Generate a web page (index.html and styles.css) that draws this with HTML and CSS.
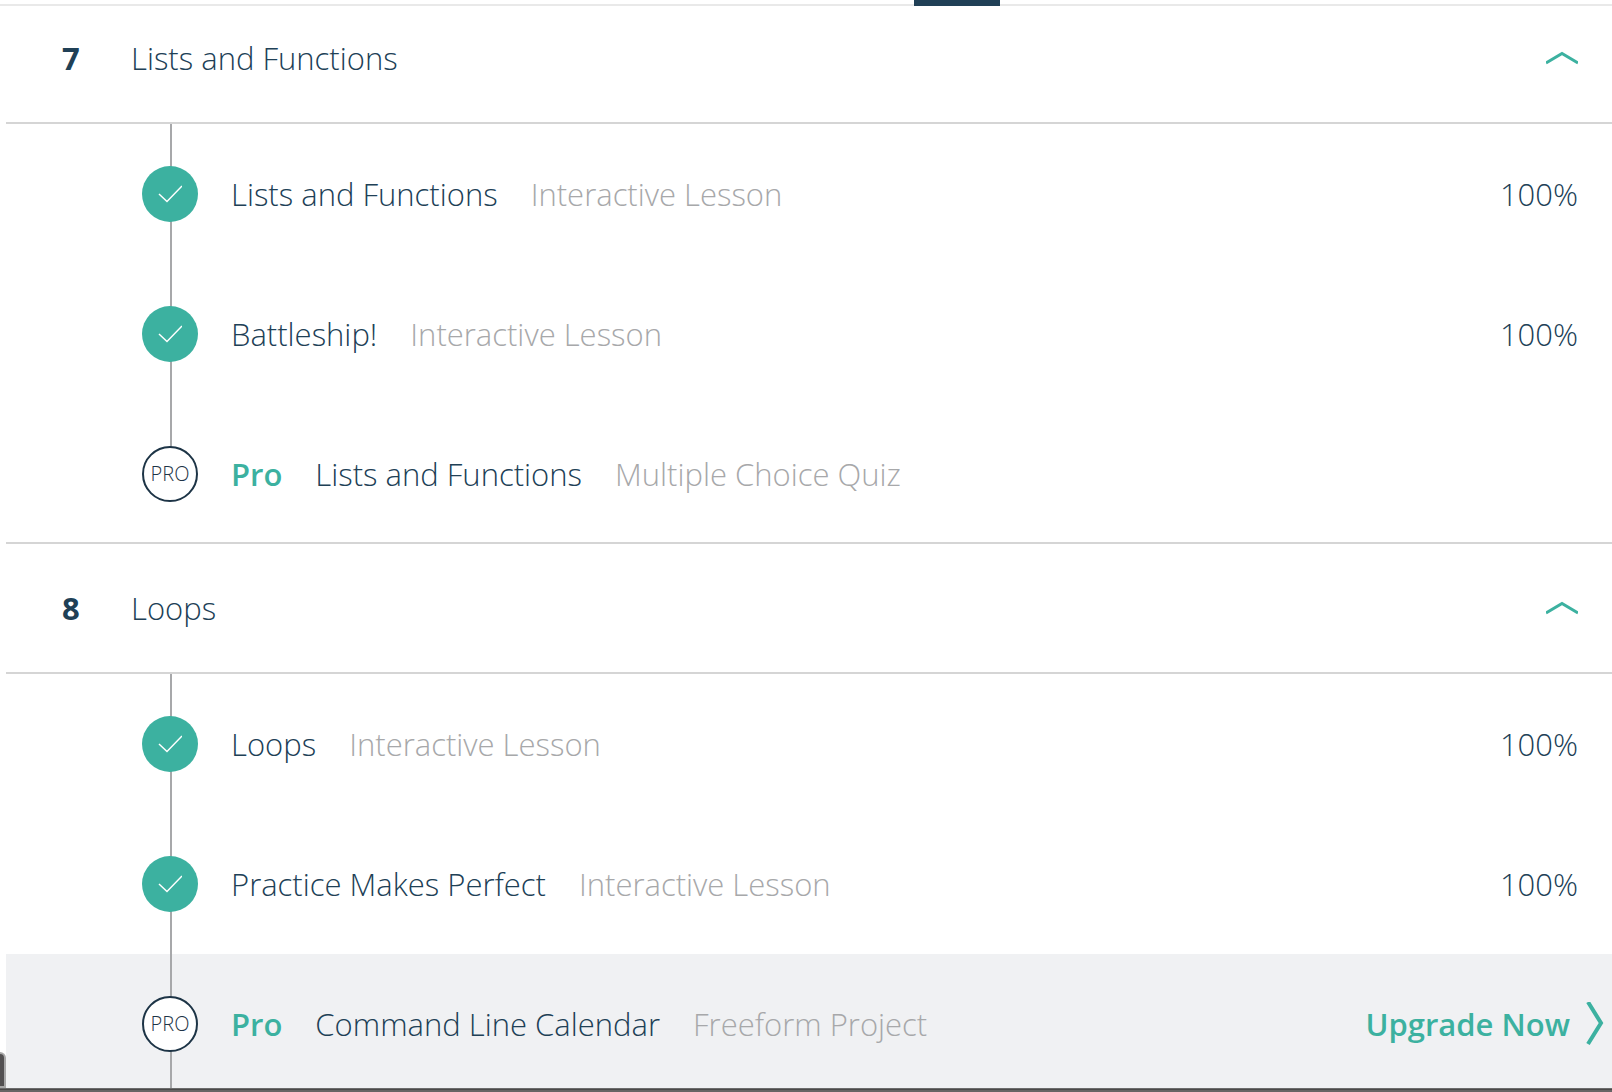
FILE: index.html
```html
<!DOCTYPE html>
<html lang="en">
<head>
<meta charset="utf-8">
<meta name="viewport" content="width=device-width, initial-scale=1">
<title>Syllabus</title>
<link rel="stylesheet" href="styles.css">
</head>
<body>
<div class="tabs"><div class="tab-active"></div></div>
<main class="syllabus">
  <section class="unit">
    <h2 class="unit-heading">
      <button class="unit-toggle unit-toggle-first" type="button" aria-expanded="true">
        <span class="unit-number">7</span>
        <span class="unit-title">Lists and Functions</span>
        <svg class="chevron-up" viewBox="0 0 32 14" aria-hidden="true"><path d="M0 12 16 2.500 32 12"/></svg>
      </button>
    </h2>
    <ul class="lessons">
      <li class="lesson">
        <span class="badge badge-done"><svg class="check" viewBox="0 0 24 18" aria-hidden="true"><path d="M1 9 9 16.500 24 1"/></svg></span>
        <a class="name" href="#">Lists and Functions</a>
        <span class="kind">Interactive Lesson</span>
        <span class="percent">100%</span>
      </li>
      <li class="lesson">
        <span class="badge badge-done"><svg class="check" viewBox="0 0 24 18" aria-hidden="true"><path d="M1 9 9 16.500 24 1"/></svg></span>
        <a class="name" href="#">Battleship!</a>
        <span class="kind">Interactive Lesson</span>
        <span class="percent">100%</span>
      </li>
      <li class="lesson lesson-end">
        <span class="badge badge-pro">PRO</span>
        <span class="pro">Pro</span>
        <a class="name" href="#">Lists and Functions</a>
        <span class="kind">Multiple Choice Quiz</span>
      </li>
    </ul>
  </section>
  <section class="unit">
    <h2 class="unit-heading">
      <button class="unit-toggle" type="button" aria-expanded="true">
        <span class="unit-number">8</span>
        <span class="unit-title">Loops</span>
        <svg class="chevron-up" viewBox="0 0 32 14" aria-hidden="true"><path d="M0 12 16 2.500 32 12"/></svg>
      </button>
    </h2>
    <ul class="lessons">
      <li class="lesson">
        <span class="badge badge-done"><svg class="check" viewBox="0 0 24 18" aria-hidden="true"><path d="M1 9 9 16.500 24 1"/></svg></span>
        <a class="name" href="#">Loops</a>
        <span class="kind">Interactive Lesson</span>
        <span class="percent">100%</span>
      </li>
      <li class="lesson">
        <span class="badge badge-done"><svg class="check" viewBox="0 0 24 18" aria-hidden="true"><path d="M1 9 9 16.500 24 1"/></svg></span>
        <a class="name" href="#">Practice Makes Perfect</a>
        <span class="kind">Interactive Lesson</span>
        <span class="percent">100%</span>
      </li>
      <li class="lesson lesson-hover">
        <span class="badge badge-pro">PRO</span>
        <span class="pro">Pro</span>
        <a class="name" href="#">Command Line Calendar</a>
        <span class="kind">Freeform Project</span>
        <a class="upgrade" href="#">Upgrade Now
          <svg class="chevron-right" viewBox="0 0 18 44" aria-hidden="true"><path d="M2 0 15 21 2 42"/></svg>
        </a>
      </li>
    </ul>
  </section>
</main>
<div class="side-handle"></div>
<div class="bottom-edge"></div>
</body>
</html>
```
FILE: styles.css
```css
* {
  box-sizing: border-box;
}

body {
  margin: 0;
  overflow: hidden;
  background: #fff;
  color: #204056;
  font: 350 31px/40px "Open Sans", "Noto Sans", sans-serif;
}

.tabs {
  display: flex;
  height: 6px;
  padding-left: 914px;
  background: linear-gradient(#fff 4px, #e9e9e9 4px);
}

.tab-active {
  width: 86px;
  background: #204056;
}

.syllabus {
  padding-left: 6px;
}

.unit-heading {
  margin: 0;
  font: inherit;
}

.unit-toggle {
  display: flex;
  align-items: center;
  width: 100%;
  padding: 44px 34px 44px 56px;
  border: 0;
  border-bottom: 2px solid #d5d5d5;
  background: none;
  color: inherit;
  font: inherit;
  text-align: left;
}

.unit-toggle-first {
  padding-top: 32px;
}

.unit-number {
  width: 69px;
  font-weight: 700;
}

.chevron-up {
  width: 32px;
  height: 14px;
  margin-left: auto;
}

.chevron-up path,
.chevron-right path {
  fill: none;
  stroke: #3cb1a0;
  stroke-width: 3;
}

.lessons {
  margin: 0;
  padding: 0;
  list-style: none;
}

.lesson {
  display: flex;
  align-items: center;
  gap: 33px;
  height: 140px;
  padding: 0 34px 0 136px;
  background: linear-gradient(#a7a8aa, #a7a8aa) 164px 0 / 2px 100% no-repeat;
}

.lesson-end {
  padding-top: 2px;
  border-bottom: 2px solid #d5d5d5;
  background-size: 2px 50%;
}

.lesson-hover {
  padding-right: 8px;
  background-color: #f0f1f3;
}

.badge {
  display: grid;
  place-items: center;
  flex: none;
  width: 56px;
  height: 56px;
  border-radius: 50%;
}

.badge-done {
  background: #3cb1a0;
}

.badge-pro {
  border: 2px solid #1d3446;
  background: #fff;
  color: #1d3446;
  font-size: 20px;
}

.check {
  width: 24px;
  height: 18px;
}

.check path {
  fill: none;
  stroke: #fff;
  stroke-width: 1.5;
}

.name {
  color: inherit;
  text-decoration: none;
}

.kind {
  color: #a7a8aa;
}

.pro,
.upgrade {
  color: #3cb1a0;
  font-weight: 600;
}

.percent,
.upgrade {
  margin-left: auto;
}

.upgrade {
  display: flex;
  align-items: center;
  gap: 16px;
  text-decoration: none;
}

.chevron-right {
  width: 18px;
  height: 44px;
}

.chevron-right path {
  stroke-width: 4;
}

.side-handle {
  position: fixed;
  bottom: 4px;
  left: 0;
  width: 6px;
  height: 36px;
  border: solid #a8a8a8;
  border-width: 2px 2px 2px 0;
  border-top-right-radius: 6px;
  background: #525051;
}

.bottom-edge {
  position: fixed;
  right: 0;
  bottom: 0;
  left: 0;
  height: 4px;
  border-top: 1px solid #6c6c6c;
  background: linear-gradient(#4b4949 1px, #676565 1px);
}
```
